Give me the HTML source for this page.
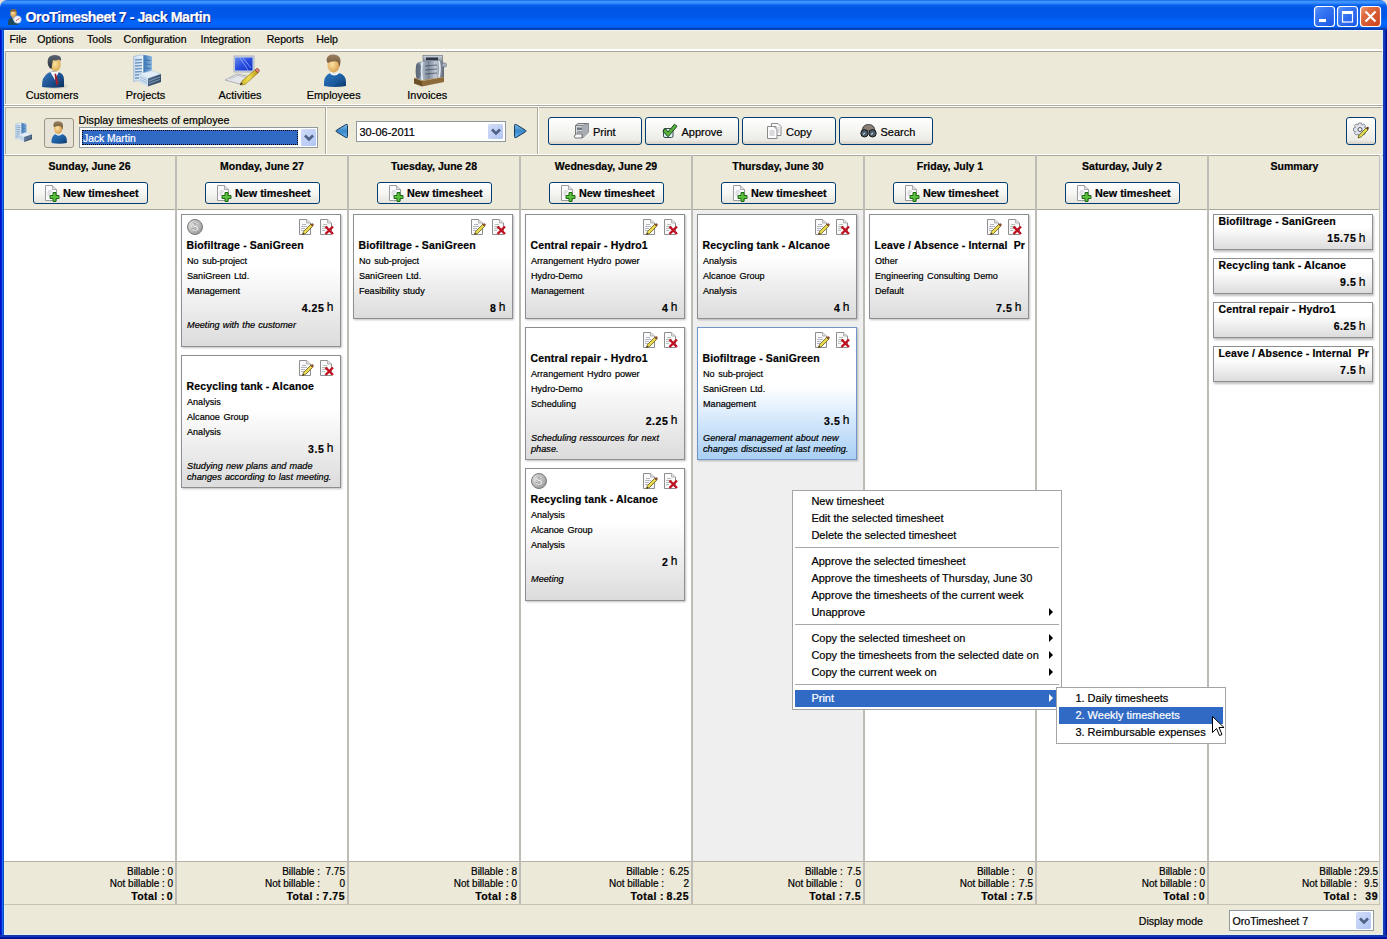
<!DOCTYPE html>
<html><head><meta charset="utf-8"><style>
body div{-webkit-text-stroke:0.2px currentColor;}
html,body{margin:0;padding:0;width:1387px;height:939px;overflow:hidden;font-family:"Liberation Sans",sans-serif;}
</style></head><body><div style="position:absolute;left:0px;top:0px;width:1387px;height:939px;background:#E8E0D8;"></div><div style="position:absolute;left:0px;top:10px;width:1387px;height:929px;background:#0A3FD0;"></div><div style="position:absolute;left:0px;top:0px;width:1387px;height:30px;background:linear-gradient(#0A58D8 0px,#3D95FF 1px,#3A90FF 3px,#0A62EE 5px,#0055E5 8px,#0058E8 17px,#0066FF 22px,#0062F6 27px,#0842B8 28.5px,#0842B8 30px);border-radius:7px 7px 0 0;"></div><div style="position:absolute;left:0px;top:30px;width:4px;height:909px;background:linear-gradient(90deg,#0010C8 0px,#0010C8 1px,#0028D0 1px,#0028D0 2px,#1A66F8 2px,#1A66F8 3px,#0850C0 3px,#0850C0 4px);"></div><div style="position:absolute;left:1383px;top:30px;width:4px;height:909px;background:linear-gradient(90deg,#1A40A8 0px,#1A40A8 1px,#1638B8 1px,#1638B8 2px,#0022B0 2px,#0022B0 3px,#001090 3px,#001090 4px);"></div><div style="position:absolute;left:0px;top:935px;width:1387px;height:4px;background:linear-gradient(#1A3A9A 0px,#1A3A9A 1px,#1438B8 1px,#1438B8 2px,#0018A8 2px,#0018A8 3px,#001090 3px,#001090 4px);"></div><div style="position:absolute;left:4px;top:30px;width:1379px;height:905px;background:#ECE9D8;"></div><div style="position:absolute;left:4px;top:934px;width:1379px;height:1px;background:#DDF0FF;"></div><div style="position:absolute;left:4px;top:30px;width:1379px;height:1px;background:#F2F4F6;"></div><div style="position:absolute;left:1382px;top:30px;width:1px;height:905px;background:#DCEEFF;"></div><div style="position:absolute;left:4px;top:30px;width:1px;height:905px;background:#E4F0FA;"></div><div style="position:absolute;top:10.48px;height:14.2px;line-height:14.2px;font-size:14.2px;white-space:pre;color:#fff;font-weight:bold;letter-spacing:-0.45px;left:25.5px;text-shadow:1px 1px 0 #0A1E85;">OroTimesheet 7 - Jack Martin</div><svg style="position:absolute;left:4px;top:6px" width="18" height="19" viewBox="0 0 18 19">
<defs><radialGradient id="tf" cx="0.4" cy="0.4" r="0.6"><stop offset="0" stop-color="#FFE7A8"/><stop offset="1" stop-color="#C8923C"/></radialGradient></defs>
<path d="M4 17 Q4 12 8 11.5 L12 11.5 Q14 12 14 15 L14 19 L4 19 Z" fill="#1E4A60"/>
<path d="M8 11.5 L10 15 L12 11.5 Z" fill="#E8EEF0"/>
<ellipse cx="9.5" cy="7.5" rx="3.2" ry="4" fill="url(#tf)"/>
<path d="M6.2 7 Q6 3 9.5 3 Q13 3 12.8 6.5 L12 5.5 Q9 6 7 5.5 Z" fill="#8A6A3A"/>
<circle cx="13.5" cy="13.5" r="3.8" fill="#F4F4F8" stroke="#A0A8C0" stroke-width="0.6"/>
<path d="M12 15 L13.5 13.5 L15.5 12.5" stroke="#B03040" stroke-width="0.8" fill="none"/>
</svg><svg style="position:absolute;left:1313px;top:5px" width="70" height="23" viewBox="0 0 70 23">
<defs>
<linearGradient id="bb" x1="0" y1="0" x2="1" y2="1"><stop offset="0" stop-color="#6E9CF8"/><stop offset="0.25" stop-color="#3C7BF4"/><stop offset="1" stop-color="#1A56E4"/></linearGradient>
<linearGradient id="rb" x1="0" y1="0" x2="1" y2="1"><stop offset="0" stop-color="#F0A080"/><stop offset="0.3" stop-color="#E06A40"/><stop offset="1" stop-color="#C8401C"/></linearGradient>
</defs>
<rect x="1.5" y="1.5" width="20" height="20" rx="3" fill="url(#bb)" stroke="#fff" stroke-width="1.2"/>
<rect x="6" y="14" width="7" height="3" fill="#fff"/>
<rect x="24.5" y="1.5" width="20" height="20" rx="3" fill="url(#bb)" stroke="#fff" stroke-width="1.2"/>
<rect x="29.5" y="7" width="10" height="10" fill="none" stroke="#fff" stroke-width="1.2"/>
<rect x="29" y="6" width="11" height="3" fill="#fff"/>
<rect x="47.5" y="1.5" width="20" height="20" rx="3" fill="url(#rb)" stroke="#fff" stroke-width="1.2"/>
<path d="M52.5 6.5 L62.5 16.5 M62.5 6.5 L52.5 16.5" stroke="#fff" stroke-width="2.2"/>
</svg><div style="position:absolute;top:34.03px;height:10.6px;line-height:10.6px;font-size:10.6px;white-space:pre;color:#000;left:9.6px;">File</div><div style="position:absolute;top:34.03px;height:10.6px;line-height:10.6px;font-size:10.6px;white-space:pre;color:#000;left:37.3px;">Options</div><div style="position:absolute;top:34.03px;height:10.6px;line-height:10.6px;font-size:10.6px;white-space:pre;color:#000;left:87px;">Tools</div><div style="position:absolute;top:34.03px;height:10.6px;line-height:10.6px;font-size:10.6px;white-space:pre;color:#000;left:123.6px;">Configuration</div><div style="position:absolute;top:34.03px;height:10.6px;line-height:10.6px;font-size:10.6px;white-space:pre;color:#000;left:200.6px;">Integration</div><div style="position:absolute;top:34.03px;height:10.6px;line-height:10.6px;font-size:10.6px;white-space:pre;color:#000;left:266.7px;">Reports</div><div style="position:absolute;top:34.03px;height:10.6px;line-height:10.6px;font-size:10.6px;white-space:pre;color:#000;left:316.2px;">Help</div><div style="position:absolute;left:4px;top:49px;width:1379px;height:2px;background:#fff;"></div><div style="position:absolute;left:5px;top:51px;width:1377px;height:1px;background:#ACA899;"></div><div style="position:absolute;left:5px;top:51px;width:1px;height:53px;background:#ACA899;"></div><div style="position:absolute;left:5px;top:104px;width:1377px;height:1px;background:#fff;"></div><div style="position:absolute;left:4px;top:105px;width:1379px;height:1px;background:#ACA899;"></div><div style="position:absolute;left:4px;top:106px;width:1379px;height:1px;background:#fff;"></div><div style="position:absolute;top:90.37px;height:10.9px;line-height:10.9px;font-size:10.9px;white-space:pre;color:#000;left:5.0px;width:94px;text-align:center;">Customers</div><div style="position:absolute;top:90.37px;height:10.9px;line-height:10.9px;font-size:10.9px;white-space:pre;color:#000;left:98.5px;width:94px;text-align:center;">Projects</div><div style="position:absolute;top:90.37px;height:10.9px;line-height:10.9px;font-size:10.9px;white-space:pre;color:#000;left:193.0px;width:94px;text-align:center;">Activities</div><div style="position:absolute;top:90.37px;height:10.9px;line-height:10.9px;font-size:10.9px;white-space:pre;color:#000;left:286.7px;width:94px;text-align:center;">Employees</div><div style="position:absolute;top:90.37px;height:10.9px;line-height:10.9px;font-size:10.9px;white-space:pre;color:#000;left:380.3px;width:94px;text-align:center;">Invoices</div><svg style="position:absolute;left:36px;top:50px" width="34" height="40" viewBox="0 0 34 40">
<defs>
<linearGradient id="suit" x1="0" y1="0" x2="1" y2="1"><stop offset="0" stop-color="#3A7BC0"/><stop offset="0.6" stop-color="#1B4F8C"/><stop offset="1" stop-color="#0C2E5A"/></linearGradient>
<radialGradient id="face" cx="0.45" cy="0.45" r="0.6"><stop offset="0" stop-color="#FBE3A0"/><stop offset="1" stop-color="#D8A850"/></radialGradient>
<linearGradient id="hair" x1="0" y1="0" x2="0" y2="1"><stop offset="0" stop-color="#5A6470"/><stop offset="1" stop-color="#2C333C"/></linearGradient>
</defs>
<ellipse cx="19" cy="36" rx="13" ry="3" fill="#000" opacity="0.08"/>
<path d="M6 37 Q5.5 27 12 23 L17 21 L22 22 Q28 23 28 30 L28 37 Q18 38.5 6 37 Z" fill="url(#suit)"/>
<path d="M14 21.5 L19 30 L23 21.5 Z" fill="#F4F6F8"/>
<path d="M18.5 24 L20 23.5 L22.5 33 L20.5 36 L19 28 Z" fill="#A02030"/>
<ellipse cx="19.5" cy="14.5" rx="5.2" ry="7" fill="url(#face)"/>
<path d="M12 15 Q10 5 19 5 Q26 5 25 11 L23 9.5 Q19 11 17 10 Q16 14 15.5 19 Q13 18 12 15 Z" fill="url(#hair)"/>
</svg><svg style="position:absolute;left:126px;top:50px" width="40" height="40" viewBox="0 0 40 40">
<defs>
<linearGradient id="blp1" x1="0" y1="0" x2="1" y2="0"><stop offset="0" stop-color="#C4D8EC"/><stop offset="1" stop-color="#F0F6FC"/></linearGradient>
<linearGradient id="brp1" x1="0" y1="0" x2="1" y2="0"><stop offset="0" stop-color="#3A78B8"/><stop offset="1" stop-color="#90B8E0"/></linearGradient>
<linearGradient id="bfp1" x1="0" y1="0" x2="1" y2="1"><stop offset="0" stop-color="#5A7898"/><stop offset="1" stop-color="#283C54"/></linearGradient>
</defs>
<path d="M7.5 6.5 Q12 4.5 17.5 5 L17.5 30 L7.5 31.5 Z" fill="url(#blp1)" stroke="#9AB4CC" stroke-width="0.6"/>
<path d="M17.5 5 Q22 5 26 6.5 L26 22 L17.5 25 Z" fill="url(#brp1)"/>
<g stroke="#7098C0" stroke-width="1.3">
<path d="M9 10 L16 9.5 M9 13 L16 12.5 M9 16 L16 15.5 M9 19 L16 18.5 M9 22 L16 21.5 M9 25 L16 24.5 M9 28 L13 28"/>
</g>
<g stroke="#2A5A98" stroke-width="1" opacity="0.6"><path d="M19 10 L25 10.5 M19 14 L25 14.5 M19 18 L25 18.5"/></g>
<path d="M13 24 L26 20.5 L35 24 L22 28.5 Z" fill="#E4EEF8" stroke="#A8C0D8" stroke-width="0.5"/>
<path d="M13 24 L22 28.5 L22 36.5 L13 32.5 Z" fill="#D0E0F0"/>
<g stroke="#98B4D0" stroke-width="0.9"><path d="M14 27 L21 30.5 M14 29.5 L21 33"/></g>
<path d="M22 28.5 L35 24 L35 32 L22 36.5 Z" fill="url(#bfp1)"/>
<g stroke="#8AA8C8" stroke-width="0.8"><path d="M23 31 L34 27 M23 33.5 L34 29.5"/></g>
</svg><svg style="position:absolute;left:220px;top:50px" width="42" height="40" viewBox="0 0 42 40">
<defs>
<linearGradient id="scr" x1="0" y1="0" x2="1" y2="1"><stop offset="0" stop-color="#6A8CF0"/><stop offset="0.5" stop-color="#2A4CE0"/><stop offset="1" stop-color="#1030C0"/></linearGradient>
<linearGradient id="pen" x1="0" y1="0" x2="1" y2="0"><stop offset="0" stop-color="#C8B020"/><stop offset="0.5" stop-color="#F0DC50"/><stop offset="1" stop-color="#B89A18"/></linearGradient>
</defs>
<rect x="14" y="6" width="20" height="16" fill="#D8DEE8" stroke="#9AA4B4" stroke-width="0.8"/>
<rect x="15" y="7.5" width="17.5" height="13" fill="url(#scr)"/>
<path d="M20 8 L28 20 M23 8 L31 18" stroke="#A8C0FF" stroke-width="1" opacity="0.7"/>
<path d="M5 30 L17 24 L32 27 L20 34 Z" fill="#E4E6EA" stroke="#A0A4AC" stroke-width="0.8"/>
<path d="M10 29 L18 25.5 L26 27.5" stroke="#B8BCC4" stroke-width="0.8" fill="none"/>
<path d="M20 35 L22 31 L35 20 L38 23 L25 34.5 Z" fill="url(#pen)" stroke="#8A7010" stroke-width="0.6"/>
<path d="M35 20 L36.5 18.5 Q38.5 18 39.5 20.5 L38 23 Z" fill="#E08070" stroke="#803020" stroke-width="0.6"/>
<path d="M20 35 L21 32.5 L23 34 Z" fill="#303030"/>
</svg><svg style="position:absolute;left:316px;top:50px" width="36" height="40" viewBox="0 0 36 40">
<defs>
<linearGradient id="she1" x1="0" y1="0" x2="1" y2="1"><stop offset="0" stop-color="#2E78C0"/><stop offset="0.6" stop-color="#1A5A9C"/><stop offset="1" stop-color="#0C3668"/></linearGradient>
<radialGradient id="fce1" cx="0.4" cy="0.45" r="0.65"><stop offset="0" stop-color="#FCE2A4"/><stop offset="1" stop-color="#D49A48"/></radialGradient>
<linearGradient id="hre1" x1="0" y1="0" x2="0" y2="1"><stop offset="0" stop-color="#9A8060"/><stop offset="1" stop-color="#6A5030"/></linearGradient>
</defs>
<path d="M8 36 Q7 26 14 23 L18 24 L23 23 Q30 25 30 32 L30 36 Q19 38 8 36 Z" fill="url(#she1)"/>
<path d="M13.5 23 Q18 28 23.5 23 L22 22 Q18 25 15 22 Z" fill="#F0F4F8"/>
<ellipse cx="17.5" cy="15" rx="6" ry="7.5" fill="url(#fce1)"/>
<path d="M10.5 10 Q11 4 18 4.5 Q25 5 24.5 12 L23.5 17 L22 12 Q17 10 11.5 13 Z" fill="url(#hre1)"/>
</svg><svg style="position:absolute;left:406px;top:50px" width="44" height="40" viewBox="0 0 44 40">
<defs>
<linearGradient id="drum" x1="0" y1="0" x2="1" y2="0"><stop offset="0" stop-color="#5A6676"/><stop offset="0.2" stop-color="#B4BECC"/><stop offset="0.45" stop-color="#7A8898"/><stop offset="0.7" stop-color="#C4CCD8"/><stop offset="1" stop-color="#5A6474"/></linearGradient>
<linearGradient id="disp" x1="0" y1="0" x2="0" y2="1"><stop offset="0" stop-color="#D0D6DE"/><stop offset="1" stop-color="#7A8490"/></linearGradient>
</defs>
<path d="M8 28 L30 25 L38 27 L16 31 Z" fill="#BC9460"/>
<path d="M8 28 L16 31 L16 36.5 L8 33.5 Z" fill="#6E5028"/>
<path d="M16 31 L38 27 L38 32 L16 36.5 Z" fill="#8C6A3A"/>
<rect x="17" y="5.5" width="19.5" height="6.5" fill="url(#disp)" stroke="#5A6474" stroke-width="0.6"/>
<rect x="20" y="7.5" width="12" height="2.6" fill="#2A3444"/>
<path d="M10 16 Q10 12 15 11.5 L34 11 Q38 11.5 38 15 L38 27 L16 30 Q10 30 10 26 Z" fill="url(#drum)"/>
<ellipse cx="12.5" cy="21" rx="3" ry="7.5" fill="#5E6A7A" opacity="0.8"/>
<path d="M16.5 12 Q14.5 21 16.5 30 M33 11 Q35 19 33 27.5" stroke="#E4EAF2" stroke-width="1.6" fill="none"/>
<path d="M19 16 L31 15 M19 20 L31 19 M19 24 L31 23" stroke="#4A5464" stroke-width="1.2" opacity="0.8"/>
<rect x="36" y="13" width="4.5" height="4" rx="1.5" fill="#A8B0BC" stroke="#5A6474" stroke-width="0.5"/>
</svg><div style="position:absolute;left:5px;top:107px;width:1377px;height:1px;background:#ACA899;"></div><div style="position:absolute;left:5px;top:107px;width:1px;height:47px;background:#ACA899;"></div><div style="position:absolute;left:5px;top:154px;width:1377px;height:1px;background:#fff;"></div><div style="position:absolute;left:325px;top:107px;width:1px;height:47px;background:#ACA899;"></div><div style="position:absolute;left:326px;top:107px;width:1px;height:47px;background:#fff;"></div><div style="position:absolute;left:537px;top:107px;width:1px;height:47px;background:#ACA899;"></div><div style="position:absolute;left:538px;top:107px;width:1px;height:47px;background:#fff;"></div><div style="position:absolute;top:115.34px;height:10.7px;line-height:10.7px;font-size:10.7px;white-space:pre;color:#000;left:78.5px;">Display timesheets of employee</div><svg style="position:absolute;left:11px;top:120px" width="24" height="24" viewBox="0 0 40 40">
<defs>
<linearGradient id="blp2" x1="0" y1="0" x2="1" y2="0"><stop offset="0" stop-color="#C4D8EC"/><stop offset="1" stop-color="#F0F6FC"/></linearGradient>
<linearGradient id="brp2" x1="0" y1="0" x2="1" y2="0"><stop offset="0" stop-color="#3A78B8"/><stop offset="1" stop-color="#90B8E0"/></linearGradient>
<linearGradient id="bfp2" x1="0" y1="0" x2="1" y2="1"><stop offset="0" stop-color="#5A7898"/><stop offset="1" stop-color="#283C54"/></linearGradient>
</defs>
<path d="M7.5 6.5 Q12 4.5 17.5 5 L17.5 30 L7.5 31.5 Z" fill="url(#blp2)" stroke="#9AB4CC" stroke-width="0.6"/>
<path d="M17.5 5 Q22 5 26 6.5 L26 22 L17.5 25 Z" fill="url(#brp2)"/>
<g stroke="#7098C0" stroke-width="1.3">
<path d="M9 10 L16 9.5 M9 13 L16 12.5 M9 16 L16 15.5 M9 19 L16 18.5 M9 22 L16 21.5 M9 25 L16 24.5 M9 28 L13 28"/>
</g>
<g stroke="#2A5A98" stroke-width="1" opacity="0.6"><path d="M19 10 L25 10.5 M19 14 L25 14.5 M19 18 L25 18.5"/></g>
<path d="M13 24 L26 20.5 L35 24 L22 28.5 Z" fill="#E4EEF8" stroke="#A8C0D8" stroke-width="0.5"/>
<path d="M13 24 L22 28.5 L22 36.5 L13 32.5 Z" fill="#D0E0F0"/>
<g stroke="#98B4D0" stroke-width="0.9"><path d="M14 27 L21 30.5 M14 29.5 L21 33"/></g>
<path d="M22 28.5 L35 24 L35 32 L22 36.5 Z" fill="url(#bfp2)"/>
<g stroke="#8AA8C8" stroke-width="0.8"><path d="M23 31 L34 27 M23 33.5 L34 29.5"/></g>
</svg><div style="position:absolute;left:44px;top:118px;width:28px;height:28px;border:1px solid #9A9684;border-radius:3px;background:#E6E3D6;"></div><svg style="position:absolute;left:46px;top:118px" width="25" height="28" viewBox="0 0 36 40">
<defs>
<linearGradient id="she2" x1="0" y1="0" x2="1" y2="1"><stop offset="0" stop-color="#2E78C0"/><stop offset="0.6" stop-color="#1A5A9C"/><stop offset="1" stop-color="#0C3668"/></linearGradient>
<radialGradient id="fce2" cx="0.4" cy="0.45" r="0.65"><stop offset="0" stop-color="#FCE2A4"/><stop offset="1" stop-color="#D49A48"/></radialGradient>
<linearGradient id="hre2" x1="0" y1="0" x2="0" y2="1"><stop offset="0" stop-color="#9A8060"/><stop offset="1" stop-color="#6A5030"/></linearGradient>
</defs>
<path d="M8 36 Q7 26 14 23 L18 24 L23 23 Q30 25 30 32 L30 36 Q19 38 8 36 Z" fill="url(#she2)"/>
<path d="M13.5 23 Q18 28 23.5 23 L22 22 Q18 25 15 22 Z" fill="#F0F4F8"/>
<ellipse cx="17.5" cy="15" rx="6" ry="7.5" fill="url(#fce2)"/>
<path d="M10.5 10 Q11 4 18 4.5 Q25 5 24.5 12 L23.5 17 L22 12 Q17 10 11.5 13 Z" fill="url(#hre2)"/>
</svg><div style="position:absolute;left:79px;top:127px;width:237px;height:19px;border:1px solid #8E9A9E;background:#fff;"></div><div style="position:absolute;left:82px;top:130px;width:216px;height:15px;background:#316AC5;outline:1px dotted #000;outline-offset:-1px;"></div><div style="position:absolute;top:134.08px;height:10.3px;line-height:10.3px;font-size:10.3px;white-space:pre;color:#fff;left:83px;">Jack Martin</div><svg style="position:absolute;left:301px;top:129px" width="15" height="17" viewBox="0 0 15 17">
<defs><linearGradient id="cbc1" x1="0" y1="0" x2="1" y2="1"><stop offset="0" stop-color="#D2DCF8"/><stop offset="1" stop-color="#B0C4F4"/></linearGradient></defs>
<rect x="0" y="0" width="15" height="17" rx="1.5" fill="url(#cbc1)"/>
<path d="M4.0 6.5 L8.0 10.5 L12.0 6.5" stroke="#4D6185" stroke-width="2.6" fill="none"/>
</svg><svg style="position:absolute;left:335px;top:123px" width="14" height="16" viewBox="0 0 14 16">
<defs><linearGradient id="nal" x1="0" y1="0" x2="0" y2="1"><stop offset="0" stop-color="#80C0F0"/><stop offset="0.5" stop-color="#3A88C8"/><stop offset="1" stop-color="#60B0F0"/></linearGradient></defs>
<path d="M12.5 2.5 Q12.5 0.6 10.7 1.6 L1.5 7.2 Q0 8 1.5 8.8 L10.7 14.4 Q12.5 15.4 12.5 13.5 Z" fill="url(#nal)" stroke="#1A3A5A" stroke-width="1"/>
</svg><div style="position:absolute;left:356px;top:121px;width:148px;height:19px;border:1px solid #8E9A9E;background:#fff;"></div><div style="position:absolute;top:126.69px;height:11px;line-height:11px;font-size:11px;white-space:pre;color:#000;left:359.5px;">30-06-2011</div><svg style="position:absolute;left:488px;top:124px" width="15" height="15" viewBox="0 0 15 15">
<defs><linearGradient id="cbc2" x1="0" y1="0" x2="1" y2="1"><stop offset="0" stop-color="#D2DCF8"/><stop offset="1" stop-color="#B0C4F4"/></linearGradient></defs>
<rect x="0" y="0" width="15" height="15" rx="1.5" fill="url(#cbc2)"/>
<path d="M4.0 5.5 L8.0 9.5 L12.0 5.5" stroke="#4D6185" stroke-width="2.6" fill="none"/>
</svg><svg style="position:absolute;left:513px;top:123px" width="14" height="16" viewBox="0 0 14 16">
<defs><linearGradient id="nar" x1="0" y1="0" x2="0" y2="1"><stop offset="0" stop-color="#80C0F0"/><stop offset="0.5" stop-color="#3A88C8"/><stop offset="1" stop-color="#60B0F0"/></linearGradient></defs>
<path d="M1.5 2.5 Q1.5 0.6 3.3 1.6 L12.5 7.2 Q14 8 12.5 8.8 L3.3 14.4 Q1.5 15.4 1.5 13.5 Z" fill="url(#nar)" stroke="#1A3A5A" stroke-width="1"/>
</svg><div style="position:absolute;left:548px;top:117px;width:92px;height:26px;border:1px solid #003C74;border-radius:3px;background:linear-gradient(#FFFFFF,#F4F4F0 50%,#ECEBE6 85%,#D6D0C5);"></div><div style="position:absolute;left:645px;top:117px;width:92px;height:26px;border:1px solid #003C74;border-radius:3px;background:linear-gradient(#FFFFFF,#F4F4F0 50%,#ECEBE6 85%,#D6D0C5);"></div><div style="position:absolute;left:742px;top:117px;width:92px;height:26px;border:1px solid #003C74;border-radius:3px;background:linear-gradient(#FFFFFF,#F4F4F0 50%,#ECEBE6 85%,#D6D0C5);"></div><div style="position:absolute;left:839px;top:117px;width:92px;height:26px;border:1px solid #003C74;border-radius:3px;background:linear-gradient(#FFFFFF,#F4F4F0 50%,#ECEBE6 85%,#D6D0C5);"></div><div style="position:absolute;top:126.69px;height:11px;line-height:11px;font-size:11px;white-space:pre;color:#000;left:593px;">Print</div><div style="position:absolute;top:126.69px;height:11px;line-height:11px;font-size:11px;white-space:pre;color:#000;left:681.5px;">Approve</div><div style="position:absolute;top:126.69px;height:11px;line-height:11px;font-size:11px;white-space:pre;color:#000;left:786px;">Copy</div><div style="position:absolute;top:126.69px;height:11px;line-height:11px;font-size:11px;white-space:pre;color:#000;left:880.5px;">Search</div><svg style="position:absolute;left:573px;top:122px" width="17" height="17" viewBox="0 0 17 17">
<path d="M2.5 3.5 L5 1.5 L15.5 1.5 L15.5 10 L10 15.5 L2.5 15.5 Z" fill="#D4D8DC" stroke="#6A6A6A" stroke-width="0.9"/>
<path d="M2.5 3.5 L10 3.5 L15.5 1.5" fill="none" stroke="#6A6A6A" stroke-width="0.8"/>
<path d="M10 3.5 L10 15.5" stroke="#6A6A6A" stroke-width="0.8"/>
<path d="M10 3.5 L15.5 1.5 L15.5 10 L10 15.5 Z" fill="#A8ACB4"/>
<rect x="4" y="5.5" width="5" height="2.5" fill="#70757C"/>
<rect x="4" y="9" width="5" height="2" fill="#9AA0A8"/>
<path d="M1 14 L3.5 12 L9 12 L9 16 L2 16 Z" fill="#FAFAFA" stroke="#555" stroke-width="0.8"/>
</svg><svg style="position:absolute;left:662px;top:123px" width="16" height="16" viewBox="0 0 16 16">
<rect x="1.5" y="5.5" width="9.5" height="9" rx="1.5" fill="#D8F0F0" stroke="#3A4A50" stroke-width="1"/>
<path d="M0.8 8 L3.5 5.8 L6 9 L12.5 1.2 L15 3.3 L6 13.8 Z" fill="#58B040" stroke="#1A4A10" stroke-width="1"/>
</svg><svg style="position:absolute;left:767px;top:123px" width="16" height="17" viewBox="0 0 16 17">
<path d="M4.5 0.5 L11 0.5 L14 3.5 L14 12.5 L9 12.5 L9 3.5 L4.5 3.5 Z" fill="#FAFAFC" stroke="#8A8A8A" stroke-width="1"/>
<path d="M0.5 3.5 L7 3.5 L10 6.5 L10 15.5 L0.5 15.5 Z" fill="#FCFCFE" stroke="#8A8A8A" stroke-width="1"/>
<path d="M2.5 8 L7.5 8 M2.5 10 L7.5 10 M2.5 12 L7.5 12" stroke="#B0B0B8" stroke-width="0.9"/>
<path d="M10.5 5 L12.5 5 M10.5 7 L12.5 7 M10.5 9 L12.5 9" stroke="#B0B0B8" stroke-width="0.9"/>
</svg><svg style="position:absolute;left:860px;top:124px" width="17" height="14" viewBox="0 0 17 14">
<path d="M2 7 Q2.5 2 5.5 1 L8.5 0.5 L11.5 1 Q14.5 2 15 7 L12 8 L8.5 7 L5 8 Z" fill="#8A8078" stroke="#2A2A2A" stroke-width="0.8"/>
<circle cx="4.5" cy="9.3" r="3.7" fill="#4A5A68" stroke="#1A1A1A" stroke-width="1"/>
<circle cx="12.5" cy="9.3" r="3.7" fill="#4A5A68" stroke="#1A1A1A" stroke-width="1"/>
<path d="M3 10.5 L5 9 M11 10.5 L13 9" stroke="#C8D4E0" stroke-width="1.2"/>
</svg><div style="position:absolute;left:1346px;top:117px;width:28px;height:26px;border:1px solid #003C74;border-radius:3px;background:linear-gradient(#FFFFFF,#F4F4F0 50%,#ECEBE6 85%,#D6D0C5);"></div><svg style="position:absolute;left:1352px;top:121px" width="18" height="18" viewBox="0 0 18 18">
<g transform="translate(8,8.5)">
<path d="M-1.5 -6.5 L1.5 -6.5 L2 -4.5 L4 -5.5 L5.5 -4 L4.5 -2 L6.5 -1.5 L6.5 1.5 L4.5 2 L5.5 4 L4 5.5 L2 4.5 L1.5 6.5 L-1.5 6.5 L-2 4.5 L-4 5.5 L-5.5 4 L-4.5 2 L-6.5 1.5 L-6.5 -1.5 L-4.5 -2 L-5.5 -4 L-4 -5.5 L-2 -4.5 Z" fill="#E0E2EC" stroke="#7A7A88" stroke-width="0.8"/>
<circle cx="0" cy="0" r="2" fill="#FAFAFA" stroke="#505060" stroke-width="1"/>
</g>
<path d="M6 17 L7 14 L14 7 L16 9 L9 16 Z" fill="#E0D850" stroke="#4A4A10" stroke-width="0.7"/>
<path d="M14 7 L15 6 Q16 5.5 16.8 6.5 Q17 7.5 16.5 8 L16 9 Z" fill="#6A3A20"/>
</svg><div style="position:absolute;left:4px;top:155px;width:1376px;height:750px;background:#fff;"></div><div style="position:absolute;left:4px;top:156px;width:1376px;height:53px;background:#ECE9D8;"></div><div style="position:absolute;left:4px;top:155px;width:1379px;height:1px;background:#ACA899;"></div><div style="position:absolute;left:4px;top:209px;width:1376px;height:1px;background:#A9A89F;"></div><div style="position:absolute;left:693px;top:210px;width:171px;height:651px;background:#EFEFEF;"></div><div style="position:absolute;left:4px;top:861px;width:1376px;height:1px;background:#B5B3A8;"></div><div style="position:absolute;left:4px;top:862px;width:1376px;height:43px;background:#ECE9D8;"></div><div style="position:absolute;left:4px;top:904px;width:1376px;height:1px;background:#C6C3B6;"></div><div style="position:absolute;left:175px;top:155px;width:2px;height:750px;background:#BDBDB5;"></div><div style="position:absolute;left:347px;top:155px;width:2px;height:750px;background:#BDBDB5;"></div><div style="position:absolute;left:519px;top:155px;width:2px;height:750px;background:#BDBDB5;"></div><div style="position:absolute;left:691px;top:155px;width:2px;height:750px;background:#BDBDB5;"></div><div style="position:absolute;left:863px;top:155px;width:2px;height:750px;background:#BDBDB5;"></div><div style="position:absolute;left:1035px;top:155px;width:2px;height:750px;background:#BDBDB5;"></div><div style="position:absolute;left:1207px;top:155px;width:2px;height:750px;background:#BDBDB5;"></div><div style="position:absolute;left:1380px;top:155px;width:2px;height:750px;background:#E8E6E0;"></div><div style="position:absolute;left:1379px;top:155px;width:1px;height:750px;background:#C4C2BC;"></div><div style="position:absolute;top:161.11px;height:10.5px;line-height:10.5px;font-size:10.5px;white-space:pre;color:#000;font-weight:bold;left:4.5px;width:170px;text-align:center;">Sunday, June 26</div><div style="position:absolute;left:33px;top:182px;width:113px;height:20px;border:1px solid #003C74;border-radius:3px;background:linear-gradient(#FFFFFF,#F3F3EF 60%,#E5E4DC);"></div><div style="position:absolute;top:187.86px;height:10.8px;line-height:10.8px;font-size:10.8px;white-space:pre;color:#000;font-weight:bold;left:63px;">New timesheet</div><svg style="position:absolute;left:45px;top:185px" width="16" height="18" viewBox="0 0 16 18">
<path d="M0.5 0.5 L7.5 0.5 L11.5 4.5 L11.5 15.5 L0.5 15.5 Z" fill="#FAFAFC" stroke="#9A9A9A" stroke-width="1"/>
<path d="M7.5 0.5 L7.5 4.5 L11.5 4.5" fill="#E4E4E8" stroke="#9A9A9A" stroke-width="0.8"/>
<path d="M3 6 L7 6 M2.5 8 L6 8 M2.5 10 L5 10" stroke="#C4C4CC" stroke-width="1"/>
<path d="M8 7.5 L11 7.5 L11 10.5 L14 10.5 L14 13.5 L11 13.5 L11 16.5 L8 16.5 L8 13.5 L5 13.5 L5 10.5 L8 10.5 Z" fill="#5CC040" stroke="#1E6A10" stroke-width="1"/>
</svg><div style="position:absolute;top:161.11px;height:10.5px;line-height:10.5px;font-size:10.5px;white-space:pre;color:#000;font-weight:bold;left:177.0px;width:170px;text-align:center;">Monday, June 27</div><div style="position:absolute;left:205px;top:182px;width:113px;height:20px;border:1px solid #003C74;border-radius:3px;background:linear-gradient(#FFFFFF,#F3F3EF 60%,#E5E4DC);"></div><div style="position:absolute;top:187.86px;height:10.8px;line-height:10.8px;font-size:10.8px;white-space:pre;color:#000;font-weight:bold;left:235px;">New timesheet</div><svg style="position:absolute;left:217px;top:185px" width="16" height="18" viewBox="0 0 16 18">
<path d="M0.5 0.5 L7.5 0.5 L11.5 4.5 L11.5 15.5 L0.5 15.5 Z" fill="#FAFAFC" stroke="#9A9A9A" stroke-width="1"/>
<path d="M7.5 0.5 L7.5 4.5 L11.5 4.5" fill="#E4E4E8" stroke="#9A9A9A" stroke-width="0.8"/>
<path d="M3 6 L7 6 M2.5 8 L6 8 M2.5 10 L5 10" stroke="#C4C4CC" stroke-width="1"/>
<path d="M8 7.5 L11 7.5 L11 10.5 L14 10.5 L14 13.5 L11 13.5 L11 16.5 L8 16.5 L8 13.5 L5 13.5 L5 10.5 L8 10.5 Z" fill="#5CC040" stroke="#1E6A10" stroke-width="1"/>
</svg><div style="position:absolute;top:161.11px;height:10.5px;line-height:10.5px;font-size:10.5px;white-space:pre;color:#000;font-weight:bold;left:349.0px;width:170px;text-align:center;">Tuesday, June 28</div><div style="position:absolute;left:377px;top:182px;width:113px;height:20px;border:1px solid #003C74;border-radius:3px;background:linear-gradient(#FFFFFF,#F3F3EF 60%,#E5E4DC);"></div><div style="position:absolute;top:187.86px;height:10.8px;line-height:10.8px;font-size:10.8px;white-space:pre;color:#000;font-weight:bold;left:407px;">New timesheet</div><svg style="position:absolute;left:389px;top:185px" width="16" height="18" viewBox="0 0 16 18">
<path d="M0.5 0.5 L7.5 0.5 L11.5 4.5 L11.5 15.5 L0.5 15.5 Z" fill="#FAFAFC" stroke="#9A9A9A" stroke-width="1"/>
<path d="M7.5 0.5 L7.5 4.5 L11.5 4.5" fill="#E4E4E8" stroke="#9A9A9A" stroke-width="0.8"/>
<path d="M3 6 L7 6 M2.5 8 L6 8 M2.5 10 L5 10" stroke="#C4C4CC" stroke-width="1"/>
<path d="M8 7.5 L11 7.5 L11 10.5 L14 10.5 L14 13.5 L11 13.5 L11 16.5 L8 16.5 L8 13.5 L5 13.5 L5 10.5 L8 10.5 Z" fill="#5CC040" stroke="#1E6A10" stroke-width="1"/>
</svg><div style="position:absolute;top:161.11px;height:10.5px;line-height:10.5px;font-size:10.5px;white-space:pre;color:#000;font-weight:bold;left:521.0px;width:170px;text-align:center;">Wednesday, June 29</div><div style="position:absolute;left:549px;top:182px;width:113px;height:20px;border:1px solid #003C74;border-radius:3px;background:linear-gradient(#FFFFFF,#F3F3EF 60%,#E5E4DC);"></div><div style="position:absolute;top:187.86px;height:10.8px;line-height:10.8px;font-size:10.8px;white-space:pre;color:#000;font-weight:bold;left:579px;">New timesheet</div><svg style="position:absolute;left:561px;top:185px" width="16" height="18" viewBox="0 0 16 18">
<path d="M0.5 0.5 L7.5 0.5 L11.5 4.5 L11.5 15.5 L0.5 15.5 Z" fill="#FAFAFC" stroke="#9A9A9A" stroke-width="1"/>
<path d="M7.5 0.5 L7.5 4.5 L11.5 4.5" fill="#E4E4E8" stroke="#9A9A9A" stroke-width="0.8"/>
<path d="M3 6 L7 6 M2.5 8 L6 8 M2.5 10 L5 10" stroke="#C4C4CC" stroke-width="1"/>
<path d="M8 7.5 L11 7.5 L11 10.5 L14 10.5 L14 13.5 L11 13.5 L11 16.5 L8 16.5 L8 13.5 L5 13.5 L5 10.5 L8 10.5 Z" fill="#5CC040" stroke="#1E6A10" stroke-width="1"/>
</svg><div style="position:absolute;top:161.11px;height:10.5px;line-height:10.5px;font-size:10.5px;white-space:pre;color:#000;font-weight:bold;left:693.0px;width:170px;text-align:center;">Thursday, June 30</div><div style="position:absolute;left:721px;top:182px;width:113px;height:20px;border:1px solid #003C74;border-radius:3px;background:linear-gradient(#FFFFFF,#F3F3EF 60%,#E5E4DC);"></div><div style="position:absolute;top:187.86px;height:10.8px;line-height:10.8px;font-size:10.8px;white-space:pre;color:#000;font-weight:bold;left:751px;">New timesheet</div><svg style="position:absolute;left:733px;top:185px" width="16" height="18" viewBox="0 0 16 18">
<path d="M0.5 0.5 L7.5 0.5 L11.5 4.5 L11.5 15.5 L0.5 15.5 Z" fill="#FAFAFC" stroke="#9A9A9A" stroke-width="1"/>
<path d="M7.5 0.5 L7.5 4.5 L11.5 4.5" fill="#E4E4E8" stroke="#9A9A9A" stroke-width="0.8"/>
<path d="M3 6 L7 6 M2.5 8 L6 8 M2.5 10 L5 10" stroke="#C4C4CC" stroke-width="1"/>
<path d="M8 7.5 L11 7.5 L11 10.5 L14 10.5 L14 13.5 L11 13.5 L11 16.5 L8 16.5 L8 13.5 L5 13.5 L5 10.5 L8 10.5 Z" fill="#5CC040" stroke="#1E6A10" stroke-width="1"/>
</svg><div style="position:absolute;top:161.11px;height:10.5px;line-height:10.5px;font-size:10.5px;white-space:pre;color:#000;font-weight:bold;left:865.0px;width:170px;text-align:center;">Friday, July 1</div><div style="position:absolute;left:893px;top:182px;width:113px;height:20px;border:1px solid #003C74;border-radius:3px;background:linear-gradient(#FFFFFF,#F3F3EF 60%,#E5E4DC);"></div><div style="position:absolute;top:187.86px;height:10.8px;line-height:10.8px;font-size:10.8px;white-space:pre;color:#000;font-weight:bold;left:923px;">New timesheet</div><svg style="position:absolute;left:905px;top:185px" width="16" height="18" viewBox="0 0 16 18">
<path d="M0.5 0.5 L7.5 0.5 L11.5 4.5 L11.5 15.5 L0.5 15.5 Z" fill="#FAFAFC" stroke="#9A9A9A" stroke-width="1"/>
<path d="M7.5 0.5 L7.5 4.5 L11.5 4.5" fill="#E4E4E8" stroke="#9A9A9A" stroke-width="0.8"/>
<path d="M3 6 L7 6 M2.5 8 L6 8 M2.5 10 L5 10" stroke="#C4C4CC" stroke-width="1"/>
<path d="M8 7.5 L11 7.5 L11 10.5 L14 10.5 L14 13.5 L11 13.5 L11 16.5 L8 16.5 L8 13.5 L5 13.5 L5 10.5 L8 10.5 Z" fill="#5CC040" stroke="#1E6A10" stroke-width="1"/>
</svg><div style="position:absolute;top:161.11px;height:10.5px;line-height:10.5px;font-size:10.5px;white-space:pre;color:#000;font-weight:bold;left:1037.0px;width:170px;text-align:center;">Saturday, July 2</div><div style="position:absolute;left:1065px;top:182px;width:113px;height:20px;border:1px solid #003C74;border-radius:3px;background:linear-gradient(#FFFFFF,#F3F3EF 60%,#E5E4DC);"></div><div style="position:absolute;top:187.86px;height:10.8px;line-height:10.8px;font-size:10.8px;white-space:pre;color:#000;font-weight:bold;left:1095px;">New timesheet</div><svg style="position:absolute;left:1077px;top:185px" width="16" height="18" viewBox="0 0 16 18">
<path d="M0.5 0.5 L7.5 0.5 L11.5 4.5 L11.5 15.5 L0.5 15.5 Z" fill="#FAFAFC" stroke="#9A9A9A" stroke-width="1"/>
<path d="M7.5 0.5 L7.5 4.5 L11.5 4.5" fill="#E4E4E8" stroke="#9A9A9A" stroke-width="0.8"/>
<path d="M3 6 L7 6 M2.5 8 L6 8 M2.5 10 L5 10" stroke="#C4C4CC" stroke-width="1"/>
<path d="M8 7.5 L11 7.5 L11 10.5 L14 10.5 L14 13.5 L11 13.5 L11 16.5 L8 16.5 L8 13.5 L5 13.5 L5 10.5 L8 10.5 Z" fill="#5CC040" stroke="#1E6A10" stroke-width="1"/>
</svg><div style="position:absolute;top:161.11px;height:10.5px;line-height:10.5px;font-size:10.5px;white-space:pre;color:#000;font-weight:bold;left:1209.5px;width:170px;text-align:center;">Summary</div><div style="position:absolute;top:866.54px;height:10px;line-height:10px;font-size:10px;white-space:pre;color:#000;left:133px;width:40px;text-align:right;">0</div><div style="position:absolute;top:878.54px;height:10px;line-height:10px;font-size:10px;white-space:pre;color:#000;left:133px;width:40px;text-align:right;">0</div><div style="position:absolute;top:890.71px;height:10.5px;line-height:10.5px;font-size:10.5px;white-space:pre;color:#000;font-weight:bold;letter-spacing:0.5px;left:133px;width:40px;text-align:right;">0</div><div style="position:absolute;top:866.54px;height:10px;line-height:10px;font-size:10px;white-space:pre;color:#000;left:64.78516796874999px;width:100px;text-align:right;">Billable :</div><div style="position:absolute;top:878.54px;height:10px;line-height:10px;font-size:10px;white-space:pre;color:#000;left:64.78516796874999px;width:100px;text-align:right;">Not billable :</div><div style="position:absolute;top:890.71px;height:10.5px;line-height:10.5px;font-size:10.5px;white-space:pre;color:#000;font-weight:bold;letter-spacing:0.4px;left:64.78516796874999px;width:100px;text-align:right;">Total :</div><div style="position:absolute;top:866.54px;height:10px;line-height:10px;font-size:10px;white-space:pre;color:#000;left:305px;width:40px;text-align:right;">7.75</div><div style="position:absolute;top:878.54px;height:10px;line-height:10px;font-size:10px;white-space:pre;color:#000;left:305px;width:40px;text-align:right;">0</div><div style="position:absolute;top:890.71px;height:10.5px;line-height:10.5px;font-size:10.5px;white-space:pre;color:#000;font-weight:bold;letter-spacing:0.5px;left:305px;width:40px;text-align:right;">7.75</div><div style="position:absolute;top:866.54px;height:10px;line-height:10px;font-size:10px;white-space:pre;color:#000;left:220.00091796875px;width:100px;text-align:right;">Billable :</div><div style="position:absolute;top:878.54px;height:10px;line-height:10px;font-size:10px;white-space:pre;color:#000;left:220.00091796875px;width:100px;text-align:right;">Not billable :</div><div style="position:absolute;top:890.71px;height:10.5px;line-height:10.5px;font-size:10.5px;white-space:pre;color:#000;font-weight:bold;letter-spacing:0.4px;left:220.00091796875px;width:100px;text-align:right;">Total :</div><div style="position:absolute;top:866.54px;height:10px;line-height:10px;font-size:10px;white-space:pre;color:#000;left:477px;width:40px;text-align:right;">8</div><div style="position:absolute;top:878.54px;height:10px;line-height:10px;font-size:10px;white-space:pre;color:#000;left:477px;width:40px;text-align:right;">0</div><div style="position:absolute;top:890.71px;height:10.5px;line-height:10.5px;font-size:10.5px;white-space:pre;color:#000;font-weight:bold;letter-spacing:0.5px;left:477px;width:40px;text-align:right;">8</div><div style="position:absolute;top:866.54px;height:10px;line-height:10px;font-size:10px;white-space:pre;color:#000;left:408.78516796875px;width:100px;text-align:right;">Billable :</div><div style="position:absolute;top:878.54px;height:10px;line-height:10px;font-size:10px;white-space:pre;color:#000;left:408.78516796875px;width:100px;text-align:right;">Not billable :</div><div style="position:absolute;top:890.71px;height:10.5px;line-height:10.5px;font-size:10.5px;white-space:pre;color:#000;font-weight:bold;letter-spacing:0.4px;left:408.78516796875px;width:100px;text-align:right;">Total :</div><div style="position:absolute;top:866.54px;height:10px;line-height:10px;font-size:10px;white-space:pre;color:#000;left:649px;width:40px;text-align:right;">6.25</div><div style="position:absolute;top:878.54px;height:10px;line-height:10px;font-size:10px;white-space:pre;color:#000;left:649px;width:40px;text-align:right;">2</div><div style="position:absolute;top:890.71px;height:10.5px;line-height:10.5px;font-size:10.5px;white-space:pre;color:#000;font-weight:bold;letter-spacing:0.5px;left:649px;width:40px;text-align:right;">8.25</div><div style="position:absolute;top:866.54px;height:10px;line-height:10px;font-size:10px;white-space:pre;color:#000;left:564.0009179687501px;width:100px;text-align:right;">Billable :</div><div style="position:absolute;top:878.54px;height:10px;line-height:10px;font-size:10px;white-space:pre;color:#000;left:564.0009179687501px;width:100px;text-align:right;">Not billable :</div><div style="position:absolute;top:890.71px;height:10.5px;line-height:10.5px;font-size:10.5px;white-space:pre;color:#000;font-weight:bold;letter-spacing:0.4px;left:564.0009179687501px;width:100px;text-align:right;">Total :</div><div style="position:absolute;top:866.54px;height:10px;line-height:10px;font-size:10px;white-space:pre;color:#000;left:821px;width:40px;text-align:right;">7.5</div><div style="position:absolute;top:878.54px;height:10px;line-height:10px;font-size:10px;white-space:pre;color:#000;left:821px;width:40px;text-align:right;">0</div><div style="position:absolute;top:890.71px;height:10.5px;line-height:10.5px;font-size:10.5px;white-space:pre;color:#000;font-weight:bold;letter-spacing:0.5px;left:821px;width:40px;text-align:right;">7.5</div><div style="position:absolute;top:866.54px;height:10px;line-height:10px;font-size:10px;white-space:pre;color:#000;left:742.71575px;width:100px;text-align:right;">Billable :</div><div style="position:absolute;top:878.54px;height:10px;line-height:10px;font-size:10px;white-space:pre;color:#000;left:742.71575px;width:100px;text-align:right;">Not billable :</div><div style="position:absolute;top:890.71px;height:10.5px;line-height:10.5px;font-size:10.5px;white-space:pre;color:#000;font-weight:bold;letter-spacing:0.4px;left:742.71575px;width:100px;text-align:right;">Total :</div><div style="position:absolute;top:866.54px;height:10px;line-height:10px;font-size:10px;white-space:pre;color:#000;left:993px;width:40px;text-align:right;">0</div><div style="position:absolute;top:878.54px;height:10px;line-height:10px;font-size:10px;white-space:pre;color:#000;left:993px;width:40px;text-align:right;">7.5</div><div style="position:absolute;top:890.71px;height:10.5px;line-height:10.5px;font-size:10.5px;white-space:pre;color:#000;font-weight:bold;letter-spacing:0.5px;left:993px;width:40px;text-align:right;">7.5</div><div style="position:absolute;top:866.54px;height:10px;line-height:10px;font-size:10px;white-space:pre;color:#000;left:914.71575px;width:100px;text-align:right;">Billable :</div><div style="position:absolute;top:878.54px;height:10px;line-height:10px;font-size:10px;white-space:pre;color:#000;left:914.71575px;width:100px;text-align:right;">Not billable :</div><div style="position:absolute;top:890.71px;height:10.5px;line-height:10.5px;font-size:10.5px;white-space:pre;color:#000;font-weight:bold;letter-spacing:0.4px;left:914.71575px;width:100px;text-align:right;">Total :</div><div style="position:absolute;top:866.54px;height:10px;line-height:10px;font-size:10px;white-space:pre;color:#000;left:1165px;width:40px;text-align:right;">0</div><div style="position:absolute;top:878.54px;height:10px;line-height:10px;font-size:10px;white-space:pre;color:#000;left:1165px;width:40px;text-align:right;">0</div><div style="position:absolute;top:890.71px;height:10.5px;line-height:10.5px;font-size:10.5px;white-space:pre;color:#000;font-weight:bold;letter-spacing:0.5px;left:1165px;width:40px;text-align:right;">0</div><div style="position:absolute;top:866.54px;height:10px;line-height:10px;font-size:10px;white-space:pre;color:#000;left:1096.78516796875px;width:100px;text-align:right;">Billable :</div><div style="position:absolute;top:878.54px;height:10px;line-height:10px;font-size:10px;white-space:pre;color:#000;left:1096.78516796875px;width:100px;text-align:right;">Not billable :</div><div style="position:absolute;top:890.71px;height:10.5px;line-height:10.5px;font-size:10.5px;white-space:pre;color:#000;font-weight:bold;letter-spacing:0.4px;left:1096.78516796875px;width:100px;text-align:right;">Total :</div><div style="position:absolute;top:866.54px;height:10px;line-height:10px;font-size:10px;white-space:pre;color:#000;left:1338px;width:40px;text-align:right;">29.5</div><div style="position:absolute;top:878.54px;height:10px;line-height:10px;font-size:10px;white-space:pre;color:#000;left:1338px;width:40px;text-align:right;">9.5</div><div style="position:absolute;top:890.71px;height:10.5px;line-height:10.5px;font-size:10.5px;white-space:pre;color:#000;font-weight:bold;letter-spacing:0.5px;left:1338px;width:40px;text-align:right;">39</div><div style="position:absolute;top:866.54px;height:10px;line-height:10px;font-size:10px;white-space:pre;color:#000;left:1257.0390625px;width:100px;text-align:right;">Billable :</div><div style="position:absolute;top:878.54px;height:10px;line-height:10px;font-size:10px;white-space:pre;color:#000;left:1257.0390625px;width:100px;text-align:right;">Not billable :</div><div style="position:absolute;top:890.71px;height:10.5px;line-height:10.5px;font-size:10.5px;white-space:pre;color:#000;font-weight:bold;letter-spacing:0.4px;left:1257.0390625px;width:100px;text-align:right;">Total :</div><div style="position:absolute;top:916.03px;height:10.6px;line-height:10.6px;font-size:10.6px;white-space:pre;color:#000;left:1053px;width:150px;text-align:right;">Display mode</div><div style="position:absolute;left:1229px;top:910px;width:143px;height:19px;border:1px solid #8E9A9E;background:#fff;"></div><div style="position:absolute;top:916.03px;height:10.6px;line-height:10.6px;font-size:10.6px;white-space:pre;color:#000;left:1232.5px;">OroTimesheet 7</div><svg style="position:absolute;left:1356px;top:912px" width="15" height="17" viewBox="0 0 15 17">
<defs><linearGradient id="cbc3" x1="0" y1="0" x2="1" y2="1"><stop offset="0" stop-color="#D2DCF8"/><stop offset="1" stop-color="#B0C4F4"/></linearGradient></defs>
<rect x="0" y="0" width="15" height="17" rx="1.5" fill="url(#cbc3)"/>
<path d="M4.0 6.5 L8.0 10.5 L12.0 6.5" stroke="#4D6185" stroke-width="2.6" fill="none"/>
</svg><div style="position:absolute;left:181px;top:214px;width:158px;height:131px;border:1px solid #8E8E8E;background:linear-gradient(#FFFFFF 0%,#FFFFFF 40%,#F0F0F0 65%,#DCDCDC 100%);box-shadow:1px 1px 2px rgba(0,0,0,0.25);"></div><svg style="position:absolute;left:298px;top:219px" width="17" height="17" viewBox="0 0 17 17">
<path d="M1.5 0.5 L8.5 0.5 L12.5 4 L12.5 15.5 L1.5 15.5 Z" fill="#FAFAFC" stroke="#8E8E8E" stroke-width="1"/>
<path d="M8.5 0.5 L8.5 4 L12.5 4" fill="#E4E4E8" stroke="#9A9A9A" stroke-width="0.7"/>
<path d="M4 5.5 L8 5.5 M3 7.5 L9 7.5 M3 9.5 L7 9.5 M3 11.5 L6 11.5" stroke="#B4B4C0" stroke-width="1"/>
<path d="M4.5 15.5 L5.5 12.5 L12.5 5.5 L14.5 7.5 L7.5 14.5 Z" fill="#E8D850" stroke="#6A5A10" stroke-width="0.8"/>
<path d="M12.5 5.5 L13.5 4.5 Q14.5 4 15.5 5 Q16 6 15.5 6.5 L14.5 7.5 Z" fill="#8A4A30"/>
<path d="M4.5 15.5 L5 13.8 L6.2 15 Z" fill="#202020"/>
</svg><svg style="position:absolute;left:319px;top:219px" width="17" height="17" viewBox="0 0 17 17">
<path d="M1.5 0.5 L8.5 0.5 L12.5 4 L12.5 15.5 L1.5 15.5 Z" fill="#FAFAFC" stroke="#8E8E8E" stroke-width="1"/>
<path d="M8.5 0.5 L8.5 4 L12.5 4" fill="#E4E4E8" stroke="#9A9A9A" stroke-width="0.7"/>
<path d="M4 5.5 L8 5.5 M3 7.5 L9 7.5 M3 9.5 L7 9.5 M3 11.5 L6 11.5" stroke="#B4C0B4" stroke-width="1"/>
<path d="M6.5 7.5 L14 15 M14 7.5 L6.5 15" stroke="#C01020" stroke-width="2.4"/>
</svg><svg style="position:absolute;left:187px;top:219px" width="16" height="16" viewBox="0 0 16 16">
<defs><radialGradient id="cg187219" cx="0.35" cy="0.35" r="0.75"><stop offset="0" stop-color="#E8E8E8"/><stop offset="0.6" stop-color="#B8B8B8"/><stop offset="1" stop-color="#909090"/></radialGradient></defs>
<circle cx="8" cy="8" r="7.5" fill="url(#cg187219)" stroke="#7A7A7A" stroke-width="1"/>
<text x="8" y="12.3" font-family="Liberation Sans" font-weight="bold" font-size="12.5" fill="#FAFAFA" stroke="#8A8A8A" stroke-width="0.4" text-anchor="middle">$</text>
</svg><div style="position:absolute;top:240.11px;height:10.5px;line-height:10.5px;font-size:10.5px;white-space:pre;color:#000;font-weight:bold;letter-spacing:0.15px;left:186.5px;">Biofiltrage - SaniGreen</div><div style="position:absolute;top:257.3px;height:9.1px;line-height:9.1px;font-size:9.1px;white-space:pre;color:#000;left:187px;word-spacing:1px;">No sub-project</div><div style="position:absolute;top:272.3px;height:9.1px;line-height:9.1px;font-size:9.1px;white-space:pre;color:#000;left:187px;word-spacing:1px;">SaniGreen Ltd.</div><div style="position:absolute;top:287.3px;height:9.1px;line-height:9.1px;font-size:9.1px;white-space:pre;color:#000;left:187px;word-spacing:1px;">Management</div><div style="position:absolute;top:301.34px;height:12px;line-height:12px;font-size:12px;white-space:pre;color:#000;left:313.5px;width:20px;text-align:right;">h</div><div style="position:absolute;top:302.61px;height:10.5px;line-height:10.5px;font-size:10.5px;white-space:pre;color:#000;font-weight:bold;letter-spacing:0.6px;left:264.5px;width:60px;text-align:right;">4.25</div><div style="position:absolute;top:321.21px;height:9.2px;line-height:9.2px;font-size:9.2px;white-space:pre;color:#000;font-style:italic;left:187px;word-spacing:0.6px;">Meeting with the customer</div><div style="position:absolute;left:181px;top:355px;width:158px;height:131px;border:1px solid #8E8E8E;background:linear-gradient(#FFFFFF 0%,#FFFFFF 40%,#F0F0F0 65%,#DCDCDC 100%);box-shadow:1px 1px 2px rgba(0,0,0,0.25);"></div><svg style="position:absolute;left:298px;top:360px" width="17" height="17" viewBox="0 0 17 17">
<path d="M1.5 0.5 L8.5 0.5 L12.5 4 L12.5 15.5 L1.5 15.5 Z" fill="#FAFAFC" stroke="#8E8E8E" stroke-width="1"/>
<path d="M8.5 0.5 L8.5 4 L12.5 4" fill="#E4E4E8" stroke="#9A9A9A" stroke-width="0.7"/>
<path d="M4 5.5 L8 5.5 M3 7.5 L9 7.5 M3 9.5 L7 9.5 M3 11.5 L6 11.5" stroke="#B4B4C0" stroke-width="1"/>
<path d="M4.5 15.5 L5.5 12.5 L12.5 5.5 L14.5 7.5 L7.5 14.5 Z" fill="#E8D850" stroke="#6A5A10" stroke-width="0.8"/>
<path d="M12.5 5.5 L13.5 4.5 Q14.5 4 15.5 5 Q16 6 15.5 6.5 L14.5 7.5 Z" fill="#8A4A30"/>
<path d="M4.5 15.5 L5 13.8 L6.2 15 Z" fill="#202020"/>
</svg><svg style="position:absolute;left:319px;top:360px" width="17" height="17" viewBox="0 0 17 17">
<path d="M1.5 0.5 L8.5 0.5 L12.5 4 L12.5 15.5 L1.5 15.5 Z" fill="#FAFAFC" stroke="#8E8E8E" stroke-width="1"/>
<path d="M8.5 0.5 L8.5 4 L12.5 4" fill="#E4E4E8" stroke="#9A9A9A" stroke-width="0.7"/>
<path d="M4 5.5 L8 5.5 M3 7.5 L9 7.5 M3 9.5 L7 9.5 M3 11.5 L6 11.5" stroke="#B4C0B4" stroke-width="1"/>
<path d="M6.5 7.5 L14 15 M14 7.5 L6.5 15" stroke="#C01020" stroke-width="2.4"/>
</svg><div style="position:absolute;top:381.11px;height:10.5px;line-height:10.5px;font-size:10.5px;white-space:pre;color:#000;font-weight:bold;letter-spacing:0.15px;left:186.5px;">Recycling tank - Alcanoe</div><div style="position:absolute;top:398.3px;height:9.1px;line-height:9.1px;font-size:9.1px;white-space:pre;color:#000;left:187px;word-spacing:1px;">Analysis</div><div style="position:absolute;top:413.3px;height:9.1px;line-height:9.1px;font-size:9.1px;white-space:pre;color:#000;left:187px;word-spacing:1px;">Alcanoe Group</div><div style="position:absolute;top:428.3px;height:9.1px;line-height:9.1px;font-size:9.1px;white-space:pre;color:#000;left:187px;word-spacing:1px;">Analysis</div><div style="position:absolute;top:442.34px;height:12px;line-height:12px;font-size:12px;white-space:pre;color:#000;left:313.5px;width:20px;text-align:right;">h</div><div style="position:absolute;top:443.61px;height:10.5px;line-height:10.5px;font-size:10.5px;white-space:pre;color:#000;font-weight:bold;letter-spacing:0.6px;left:264.5px;width:60px;text-align:right;">3.5</div><div style="position:absolute;top:462.21px;height:9.2px;line-height:9.2px;font-size:9.2px;white-space:pre;color:#000;font-style:italic;left:187px;word-spacing:0.6px;">Studying new plans and made</div><div style="position:absolute;top:473.21px;height:9.2px;line-height:9.2px;font-size:9.2px;white-space:pre;color:#000;font-style:italic;left:187px;word-spacing:0.6px;">changes according to last meeting.</div><div style="position:absolute;left:353px;top:214px;width:158px;height:103px;border:1px solid #8E8E8E;background:linear-gradient(#FFFFFF 0%,#FFFFFF 40%,#F0F0F0 65%,#DCDCDC 100%);box-shadow:1px 1px 2px rgba(0,0,0,0.25);"></div><svg style="position:absolute;left:470px;top:219px" width="17" height="17" viewBox="0 0 17 17">
<path d="M1.5 0.5 L8.5 0.5 L12.5 4 L12.5 15.5 L1.5 15.5 Z" fill="#FAFAFC" stroke="#8E8E8E" stroke-width="1"/>
<path d="M8.5 0.5 L8.5 4 L12.5 4" fill="#E4E4E8" stroke="#9A9A9A" stroke-width="0.7"/>
<path d="M4 5.5 L8 5.5 M3 7.5 L9 7.5 M3 9.5 L7 9.5 M3 11.5 L6 11.5" stroke="#B4B4C0" stroke-width="1"/>
<path d="M4.5 15.5 L5.5 12.5 L12.5 5.5 L14.5 7.5 L7.5 14.5 Z" fill="#E8D850" stroke="#6A5A10" stroke-width="0.8"/>
<path d="M12.5 5.5 L13.5 4.5 Q14.5 4 15.5 5 Q16 6 15.5 6.5 L14.5 7.5 Z" fill="#8A4A30"/>
<path d="M4.5 15.5 L5 13.8 L6.2 15 Z" fill="#202020"/>
</svg><svg style="position:absolute;left:491px;top:219px" width="17" height="17" viewBox="0 0 17 17">
<path d="M1.5 0.5 L8.5 0.5 L12.5 4 L12.5 15.5 L1.5 15.5 Z" fill="#FAFAFC" stroke="#8E8E8E" stroke-width="1"/>
<path d="M8.5 0.5 L8.5 4 L12.5 4" fill="#E4E4E8" stroke="#9A9A9A" stroke-width="0.7"/>
<path d="M4 5.5 L8 5.5 M3 7.5 L9 7.5 M3 9.5 L7 9.5 M3 11.5 L6 11.5" stroke="#B4C0B4" stroke-width="1"/>
<path d="M6.5 7.5 L14 15 M14 7.5 L6.5 15" stroke="#C01020" stroke-width="2.4"/>
</svg><div style="position:absolute;top:240.11px;height:10.5px;line-height:10.5px;font-size:10.5px;white-space:pre;color:#000;font-weight:bold;letter-spacing:0.15px;left:358.5px;">Biofiltrage - SaniGreen</div><div style="position:absolute;top:257.3px;height:9.1px;line-height:9.1px;font-size:9.1px;white-space:pre;color:#000;left:359px;word-spacing:1px;">No sub-project</div><div style="position:absolute;top:272.3px;height:9.1px;line-height:9.1px;font-size:9.1px;white-space:pre;color:#000;left:359px;word-spacing:1px;">SaniGreen Ltd.</div><div style="position:absolute;top:287.3px;height:9.1px;line-height:9.1px;font-size:9.1px;white-space:pre;color:#000;left:359px;word-spacing:1px;">Feasibility study</div><div style="position:absolute;top:301.34px;height:12px;line-height:12px;font-size:12px;white-space:pre;color:#000;left:485.5px;width:20px;text-align:right;">h</div><div style="position:absolute;top:302.61px;height:10.5px;line-height:10.5px;font-size:10.5px;white-space:pre;color:#000;font-weight:bold;letter-spacing:0.6px;left:436.5px;width:60px;text-align:right;">8</div><div style="position:absolute;left:525px;top:214px;width:158px;height:103px;border:1px solid #8E8E8E;background:linear-gradient(#FFFFFF 0%,#FFFFFF 40%,#F0F0F0 65%,#DCDCDC 100%);box-shadow:1px 1px 2px rgba(0,0,0,0.25);"></div><svg style="position:absolute;left:642px;top:219px" width="17" height="17" viewBox="0 0 17 17">
<path d="M1.5 0.5 L8.5 0.5 L12.5 4 L12.5 15.5 L1.5 15.5 Z" fill="#FAFAFC" stroke="#8E8E8E" stroke-width="1"/>
<path d="M8.5 0.5 L8.5 4 L12.5 4" fill="#E4E4E8" stroke="#9A9A9A" stroke-width="0.7"/>
<path d="M4 5.5 L8 5.5 M3 7.5 L9 7.5 M3 9.5 L7 9.5 M3 11.5 L6 11.5" stroke="#B4B4C0" stroke-width="1"/>
<path d="M4.5 15.5 L5.5 12.5 L12.5 5.5 L14.5 7.5 L7.5 14.5 Z" fill="#E8D850" stroke="#6A5A10" stroke-width="0.8"/>
<path d="M12.5 5.5 L13.5 4.5 Q14.5 4 15.5 5 Q16 6 15.5 6.5 L14.5 7.5 Z" fill="#8A4A30"/>
<path d="M4.5 15.5 L5 13.8 L6.2 15 Z" fill="#202020"/>
</svg><svg style="position:absolute;left:663px;top:219px" width="17" height="17" viewBox="0 0 17 17">
<path d="M1.5 0.5 L8.5 0.5 L12.5 4 L12.5 15.5 L1.5 15.5 Z" fill="#FAFAFC" stroke="#8E8E8E" stroke-width="1"/>
<path d="M8.5 0.5 L8.5 4 L12.5 4" fill="#E4E4E8" stroke="#9A9A9A" stroke-width="0.7"/>
<path d="M4 5.5 L8 5.5 M3 7.5 L9 7.5 M3 9.5 L7 9.5 M3 11.5 L6 11.5" stroke="#B4C0B4" stroke-width="1"/>
<path d="M6.5 7.5 L14 15 M14 7.5 L6.5 15" stroke="#C01020" stroke-width="2.4"/>
</svg><div style="position:absolute;top:240.11px;height:10.5px;line-height:10.5px;font-size:10.5px;white-space:pre;color:#000;font-weight:bold;letter-spacing:0.15px;left:530.5px;">Central repair - Hydro1</div><div style="position:absolute;top:257.3px;height:9.1px;line-height:9.1px;font-size:9.1px;white-space:pre;color:#000;left:531px;word-spacing:1px;">Arrangement Hydro power</div><div style="position:absolute;top:272.3px;height:9.1px;line-height:9.1px;font-size:9.1px;white-space:pre;color:#000;left:531px;word-spacing:1px;">Hydro-Demo</div><div style="position:absolute;top:287.3px;height:9.1px;line-height:9.1px;font-size:9.1px;white-space:pre;color:#000;left:531px;word-spacing:1px;">Management</div><div style="position:absolute;top:301.34px;height:12px;line-height:12px;font-size:12px;white-space:pre;color:#000;left:657.5px;width:20px;text-align:right;">h</div><div style="position:absolute;top:302.61px;height:10.5px;line-height:10.5px;font-size:10.5px;white-space:pre;color:#000;font-weight:bold;letter-spacing:0.6px;left:608.5px;width:60px;text-align:right;">4</div><div style="position:absolute;left:525px;top:327px;width:158px;height:131px;border:1px solid #8E8E8E;background:linear-gradient(#FFFFFF 0%,#FFFFFF 40%,#F0F0F0 65%,#DCDCDC 100%);box-shadow:1px 1px 2px rgba(0,0,0,0.25);"></div><svg style="position:absolute;left:642px;top:332px" width="17" height="17" viewBox="0 0 17 17">
<path d="M1.5 0.5 L8.5 0.5 L12.5 4 L12.5 15.5 L1.5 15.5 Z" fill="#FAFAFC" stroke="#8E8E8E" stroke-width="1"/>
<path d="M8.5 0.5 L8.5 4 L12.5 4" fill="#E4E4E8" stroke="#9A9A9A" stroke-width="0.7"/>
<path d="M4 5.5 L8 5.5 M3 7.5 L9 7.5 M3 9.5 L7 9.5 M3 11.5 L6 11.5" stroke="#B4B4C0" stroke-width="1"/>
<path d="M4.5 15.5 L5.5 12.5 L12.5 5.5 L14.5 7.5 L7.5 14.5 Z" fill="#E8D850" stroke="#6A5A10" stroke-width="0.8"/>
<path d="M12.5 5.5 L13.5 4.5 Q14.5 4 15.5 5 Q16 6 15.5 6.5 L14.5 7.5 Z" fill="#8A4A30"/>
<path d="M4.5 15.5 L5 13.8 L6.2 15 Z" fill="#202020"/>
</svg><svg style="position:absolute;left:663px;top:332px" width="17" height="17" viewBox="0 0 17 17">
<path d="M1.5 0.5 L8.5 0.5 L12.5 4 L12.5 15.5 L1.5 15.5 Z" fill="#FAFAFC" stroke="#8E8E8E" stroke-width="1"/>
<path d="M8.5 0.5 L8.5 4 L12.5 4" fill="#E4E4E8" stroke="#9A9A9A" stroke-width="0.7"/>
<path d="M4 5.5 L8 5.5 M3 7.5 L9 7.5 M3 9.5 L7 9.5 M3 11.5 L6 11.5" stroke="#B4C0B4" stroke-width="1"/>
<path d="M6.5 7.5 L14 15 M14 7.5 L6.5 15" stroke="#C01020" stroke-width="2.4"/>
</svg><div style="position:absolute;top:353.11px;height:10.5px;line-height:10.5px;font-size:10.5px;white-space:pre;color:#000;font-weight:bold;letter-spacing:0.15px;left:530.5px;">Central repair - Hydro1</div><div style="position:absolute;top:370.3px;height:9.1px;line-height:9.1px;font-size:9.1px;white-space:pre;color:#000;left:531px;word-spacing:1px;">Arrangement Hydro power</div><div style="position:absolute;top:385.3px;height:9.1px;line-height:9.1px;font-size:9.1px;white-space:pre;color:#000;left:531px;word-spacing:1px;">Hydro-Demo</div><div style="position:absolute;top:400.3px;height:9.1px;line-height:9.1px;font-size:9.1px;white-space:pre;color:#000;left:531px;word-spacing:1px;">Scheduling</div><div style="position:absolute;top:414.34px;height:12px;line-height:12px;font-size:12px;white-space:pre;color:#000;left:657.5px;width:20px;text-align:right;">h</div><div style="position:absolute;top:415.61px;height:10.5px;line-height:10.5px;font-size:10.5px;white-space:pre;color:#000;font-weight:bold;letter-spacing:0.6px;left:608.5px;width:60px;text-align:right;">2.25</div><div style="position:absolute;top:434.21px;height:9.2px;line-height:9.2px;font-size:9.2px;white-space:pre;color:#000;font-style:italic;left:531px;word-spacing:0.6px;">Scheduling ressources for next</div><div style="position:absolute;top:445.21px;height:9.2px;line-height:9.2px;font-size:9.2px;white-space:pre;color:#000;font-style:italic;left:531px;word-spacing:0.6px;">phase.</div><div style="position:absolute;left:525px;top:468px;width:158px;height:131px;border:1px solid #8E8E8E;background:linear-gradient(#FFFFFF 0%,#FFFFFF 40%,#F0F0F0 65%,#DCDCDC 100%);box-shadow:1px 1px 2px rgba(0,0,0,0.25);"></div><svg style="position:absolute;left:642px;top:473px" width="17" height="17" viewBox="0 0 17 17">
<path d="M1.5 0.5 L8.5 0.5 L12.5 4 L12.5 15.5 L1.5 15.5 Z" fill="#FAFAFC" stroke="#8E8E8E" stroke-width="1"/>
<path d="M8.5 0.5 L8.5 4 L12.5 4" fill="#E4E4E8" stroke="#9A9A9A" stroke-width="0.7"/>
<path d="M4 5.5 L8 5.5 M3 7.5 L9 7.5 M3 9.5 L7 9.5 M3 11.5 L6 11.5" stroke="#B4B4C0" stroke-width="1"/>
<path d="M4.5 15.5 L5.5 12.5 L12.5 5.5 L14.5 7.5 L7.5 14.5 Z" fill="#E8D850" stroke="#6A5A10" stroke-width="0.8"/>
<path d="M12.5 5.5 L13.5 4.5 Q14.5 4 15.5 5 Q16 6 15.5 6.5 L14.5 7.5 Z" fill="#8A4A30"/>
<path d="M4.5 15.5 L5 13.8 L6.2 15 Z" fill="#202020"/>
</svg><svg style="position:absolute;left:663px;top:473px" width="17" height="17" viewBox="0 0 17 17">
<path d="M1.5 0.5 L8.5 0.5 L12.5 4 L12.5 15.5 L1.5 15.5 Z" fill="#FAFAFC" stroke="#8E8E8E" stroke-width="1"/>
<path d="M8.5 0.5 L8.5 4 L12.5 4" fill="#E4E4E8" stroke="#9A9A9A" stroke-width="0.7"/>
<path d="M4 5.5 L8 5.5 M3 7.5 L9 7.5 M3 9.5 L7 9.5 M3 11.5 L6 11.5" stroke="#B4C0B4" stroke-width="1"/>
<path d="M6.5 7.5 L14 15 M14 7.5 L6.5 15" stroke="#C01020" stroke-width="2.4"/>
</svg><svg style="position:absolute;left:531px;top:473px" width="16" height="16" viewBox="0 0 16 16">
<defs><radialGradient id="cg531473" cx="0.35" cy="0.35" r="0.75"><stop offset="0" stop-color="#E8E8E8"/><stop offset="0.6" stop-color="#B8B8B8"/><stop offset="1" stop-color="#909090"/></radialGradient></defs>
<circle cx="8" cy="8" r="7.5" fill="url(#cg531473)" stroke="#7A7A7A" stroke-width="1"/>
<text x="8" y="12.3" font-family="Liberation Sans" font-weight="bold" font-size="12.5" fill="#FAFAFA" stroke="#8A8A8A" stroke-width="0.4" text-anchor="middle">$</text>
</svg><div style="position:absolute;top:494.11px;height:10.5px;line-height:10.5px;font-size:10.5px;white-space:pre;color:#000;font-weight:bold;letter-spacing:0.15px;left:530.5px;">Recycling tank - Alcanoe</div><div style="position:absolute;top:511.3px;height:9.1px;line-height:9.1px;font-size:9.1px;white-space:pre;color:#000;left:531px;word-spacing:1px;">Analysis</div><div style="position:absolute;top:526.3px;height:9.1px;line-height:9.1px;font-size:9.1px;white-space:pre;color:#000;left:531px;word-spacing:1px;">Alcanoe Group</div><div style="position:absolute;top:541.3px;height:9.1px;line-height:9.1px;font-size:9.1px;white-space:pre;color:#000;left:531px;word-spacing:1px;">Analysis</div><div style="position:absolute;top:555.34px;height:12px;line-height:12px;font-size:12px;white-space:pre;color:#000;left:657.5px;width:20px;text-align:right;">h</div><div style="position:absolute;top:556.61px;height:10.5px;line-height:10.5px;font-size:10.5px;white-space:pre;color:#000;font-weight:bold;letter-spacing:0.6px;left:608.5px;width:60px;text-align:right;">2</div><div style="position:absolute;top:575.21px;height:9.2px;line-height:9.2px;font-size:9.2px;white-space:pre;color:#000;font-style:italic;left:531px;word-spacing:0.6px;">Meeting</div><div style="position:absolute;left:697px;top:214px;width:158px;height:103px;border:1px solid #8E8E8E;background:linear-gradient(#FFFFFF 0%,#FFFFFF 40%,#F0F0F0 65%,#DCDCDC 100%);box-shadow:1px 1px 2px rgba(0,0,0,0.25);"></div><svg style="position:absolute;left:814px;top:219px" width="17" height="17" viewBox="0 0 17 17">
<path d="M1.5 0.5 L8.5 0.5 L12.5 4 L12.5 15.5 L1.5 15.5 Z" fill="#FAFAFC" stroke="#8E8E8E" stroke-width="1"/>
<path d="M8.5 0.5 L8.5 4 L12.5 4" fill="#E4E4E8" stroke="#9A9A9A" stroke-width="0.7"/>
<path d="M4 5.5 L8 5.5 M3 7.5 L9 7.5 M3 9.5 L7 9.5 M3 11.5 L6 11.5" stroke="#B4B4C0" stroke-width="1"/>
<path d="M4.5 15.5 L5.5 12.5 L12.5 5.5 L14.5 7.5 L7.5 14.5 Z" fill="#E8D850" stroke="#6A5A10" stroke-width="0.8"/>
<path d="M12.5 5.5 L13.5 4.5 Q14.5 4 15.5 5 Q16 6 15.5 6.5 L14.5 7.5 Z" fill="#8A4A30"/>
<path d="M4.5 15.5 L5 13.8 L6.2 15 Z" fill="#202020"/>
</svg><svg style="position:absolute;left:835px;top:219px" width="17" height="17" viewBox="0 0 17 17">
<path d="M1.5 0.5 L8.5 0.5 L12.5 4 L12.5 15.5 L1.5 15.5 Z" fill="#FAFAFC" stroke="#8E8E8E" stroke-width="1"/>
<path d="M8.5 0.5 L8.5 4 L12.5 4" fill="#E4E4E8" stroke="#9A9A9A" stroke-width="0.7"/>
<path d="M4 5.5 L8 5.5 M3 7.5 L9 7.5 M3 9.5 L7 9.5 M3 11.5 L6 11.5" stroke="#B4C0B4" stroke-width="1"/>
<path d="M6.5 7.5 L14 15 M14 7.5 L6.5 15" stroke="#C01020" stroke-width="2.4"/>
</svg><div style="position:absolute;top:240.11px;height:10.5px;line-height:10.5px;font-size:10.5px;white-space:pre;color:#000;font-weight:bold;letter-spacing:0.15px;left:702.5px;">Recycling tank - Alcanoe</div><div style="position:absolute;top:257.3px;height:9.1px;line-height:9.1px;font-size:9.1px;white-space:pre;color:#000;left:703px;word-spacing:1px;">Analysis</div><div style="position:absolute;top:272.3px;height:9.1px;line-height:9.1px;font-size:9.1px;white-space:pre;color:#000;left:703px;word-spacing:1px;">Alcanoe Group</div><div style="position:absolute;top:287.3px;height:9.1px;line-height:9.1px;font-size:9.1px;white-space:pre;color:#000;left:703px;word-spacing:1px;">Analysis</div><div style="position:absolute;top:301.34px;height:12px;line-height:12px;font-size:12px;white-space:pre;color:#000;left:829.5px;width:20px;text-align:right;">h</div><div style="position:absolute;top:302.61px;height:10.5px;line-height:10.5px;font-size:10.5px;white-space:pre;color:#000;font-weight:bold;letter-spacing:0.6px;left:780.5px;width:60px;text-align:right;">4</div><div style="position:absolute;left:697px;top:327px;width:158px;height:131px;border:1px solid #6E97C8;background:linear-gradient(#FFFFFF 0%,#FFFFFF 45%,#D5E8FB 70%,#A9D0F5 100%);box-shadow:1px 1px 2px rgba(0,0,0,0.25);"></div><svg style="position:absolute;left:814px;top:332px" width="17" height="17" viewBox="0 0 17 17">
<path d="M1.5 0.5 L8.5 0.5 L12.5 4 L12.5 15.5 L1.5 15.5 Z" fill="#FAFAFC" stroke="#8E8E8E" stroke-width="1"/>
<path d="M8.5 0.5 L8.5 4 L12.5 4" fill="#E4E4E8" stroke="#9A9A9A" stroke-width="0.7"/>
<path d="M4 5.5 L8 5.5 M3 7.5 L9 7.5 M3 9.5 L7 9.5 M3 11.5 L6 11.5" stroke="#B4B4C0" stroke-width="1"/>
<path d="M4.5 15.5 L5.5 12.5 L12.5 5.5 L14.5 7.5 L7.5 14.5 Z" fill="#E8D850" stroke="#6A5A10" stroke-width="0.8"/>
<path d="M12.5 5.5 L13.5 4.5 Q14.5 4 15.5 5 Q16 6 15.5 6.5 L14.5 7.5 Z" fill="#8A4A30"/>
<path d="M4.5 15.5 L5 13.8 L6.2 15 Z" fill="#202020"/>
</svg><svg style="position:absolute;left:835px;top:332px" width="17" height="17" viewBox="0 0 17 17">
<path d="M1.5 0.5 L8.5 0.5 L12.5 4 L12.5 15.5 L1.5 15.5 Z" fill="#FAFAFC" stroke="#8E8E8E" stroke-width="1"/>
<path d="M8.5 0.5 L8.5 4 L12.5 4" fill="#E4E4E8" stroke="#9A9A9A" stroke-width="0.7"/>
<path d="M4 5.5 L8 5.5 M3 7.5 L9 7.5 M3 9.5 L7 9.5 M3 11.5 L6 11.5" stroke="#B4C0B4" stroke-width="1"/>
<path d="M6.5 7.5 L14 15 M14 7.5 L6.5 15" stroke="#C01020" stroke-width="2.4"/>
</svg><div style="position:absolute;top:353.11px;height:10.5px;line-height:10.5px;font-size:10.5px;white-space:pre;color:#000;font-weight:bold;letter-spacing:0.15px;left:702.5px;">Biofiltrage - SaniGreen</div><div style="position:absolute;top:370.3px;height:9.1px;line-height:9.1px;font-size:9.1px;white-space:pre;color:#000;left:703px;word-spacing:1px;">No sub-project</div><div style="position:absolute;top:385.3px;height:9.1px;line-height:9.1px;font-size:9.1px;white-space:pre;color:#000;left:703px;word-spacing:1px;">SaniGreen Ltd.</div><div style="position:absolute;top:400.3px;height:9.1px;line-height:9.1px;font-size:9.1px;white-space:pre;color:#000;left:703px;word-spacing:1px;">Management</div><div style="position:absolute;top:414.34px;height:12px;line-height:12px;font-size:12px;white-space:pre;color:#000;left:829.5px;width:20px;text-align:right;">h</div><div style="position:absolute;top:415.61px;height:10.5px;line-height:10.5px;font-size:10.5px;white-space:pre;color:#000;font-weight:bold;letter-spacing:0.6px;left:780.5px;width:60px;text-align:right;">3.5</div><div style="position:absolute;top:434.21px;height:9.2px;line-height:9.2px;font-size:9.2px;white-space:pre;color:#000;font-style:italic;left:703px;word-spacing:0.6px;">General management about new</div><div style="position:absolute;top:445.21px;height:9.2px;line-height:9.2px;font-size:9.2px;white-space:pre;color:#000;font-style:italic;left:703px;word-spacing:0.6px;">changes discussed at last meeting.</div><div style="position:absolute;left:869px;top:214px;width:158px;height:103px;border:1px solid #8E8E8E;background:linear-gradient(#FFFFFF 0%,#FFFFFF 40%,#F0F0F0 65%,#DCDCDC 100%);box-shadow:1px 1px 2px rgba(0,0,0,0.25);"></div><svg style="position:absolute;left:986px;top:219px" width="17" height="17" viewBox="0 0 17 17">
<path d="M1.5 0.5 L8.5 0.5 L12.5 4 L12.5 15.5 L1.5 15.5 Z" fill="#FAFAFC" stroke="#8E8E8E" stroke-width="1"/>
<path d="M8.5 0.5 L8.5 4 L12.5 4" fill="#E4E4E8" stroke="#9A9A9A" stroke-width="0.7"/>
<path d="M4 5.5 L8 5.5 M3 7.5 L9 7.5 M3 9.5 L7 9.5 M3 11.5 L6 11.5" stroke="#B4B4C0" stroke-width="1"/>
<path d="M4.5 15.5 L5.5 12.5 L12.5 5.5 L14.5 7.5 L7.5 14.5 Z" fill="#E8D850" stroke="#6A5A10" stroke-width="0.8"/>
<path d="M12.5 5.5 L13.5 4.5 Q14.5 4 15.5 5 Q16 6 15.5 6.5 L14.5 7.5 Z" fill="#8A4A30"/>
<path d="M4.5 15.5 L5 13.8 L6.2 15 Z" fill="#202020"/>
</svg><svg style="position:absolute;left:1007px;top:219px" width="17" height="17" viewBox="0 0 17 17">
<path d="M1.5 0.5 L8.5 0.5 L12.5 4 L12.5 15.5 L1.5 15.5 Z" fill="#FAFAFC" stroke="#8E8E8E" stroke-width="1"/>
<path d="M8.5 0.5 L8.5 4 L12.5 4" fill="#E4E4E8" stroke="#9A9A9A" stroke-width="0.7"/>
<path d="M4 5.5 L8 5.5 M3 7.5 L9 7.5 M3 9.5 L7 9.5 M3 11.5 L6 11.5" stroke="#B4C0B4" stroke-width="1"/>
<path d="M6.5 7.5 L14 15 M14 7.5 L6.5 15" stroke="#C01020" stroke-width="2.4"/>
</svg><div style="position:absolute;left:870px;top:234px;width:157px;height:20px;overflow:hidden;"><div style="position:absolute;top:6.11px;height:10.5px;line-height:10.5px;font-size:10.5px;white-space:pre;color:#000;font-weight:bold;letter-spacing:0.15px;left:4.5px;">Leave / Absence - Internal  Pr</div></div><div style="position:absolute;top:257.3px;height:9.1px;line-height:9.1px;font-size:9.1px;white-space:pre;color:#000;left:875px;word-spacing:1px;">Other</div><div style="position:absolute;top:272.3px;height:9.1px;line-height:9.1px;font-size:9.1px;white-space:pre;color:#000;left:875px;word-spacing:1px;">Engineering Consulting Demo</div><div style="position:absolute;top:287.3px;height:9.1px;line-height:9.1px;font-size:9.1px;white-space:pre;color:#000;left:875px;word-spacing:1px;">Default</div><div style="position:absolute;top:301.34px;height:12px;line-height:12px;font-size:12px;white-space:pre;color:#000;left:1001.5px;width:20px;text-align:right;">h</div><div style="position:absolute;top:302.61px;height:10.5px;line-height:10.5px;font-size:10.5px;white-space:pre;color:#000;font-weight:bold;letter-spacing:0.6px;left:952.5px;width:60px;text-align:right;">7.5</div><div style="position:absolute;left:1213px;top:214px;width:158px;height:34px;border:1px solid #8E8E8E;background:linear-gradient(#FFFFFF 0%,#FFFFFF 35%,#EFEFEF 65%,#DCDCDC 100%);box-shadow:1px 2px 2px rgba(0,0,0,0.25);"></div><div style="position:absolute;left:1214px;top:215px;width:157px;height:20px;overflow:hidden;"><div style="position:absolute;top:0.81px;height:10.5px;line-height:10.5px;font-size:10.5px;white-space:pre;color:#000;font-weight:bold;letter-spacing:0.15px;left:4.5px;">Biofiltrage - SaniGreen</div></div><div style="position:absolute;top:231.84px;height:12px;line-height:12px;font-size:12px;white-space:pre;color:#000;left:1345.5px;width:20px;text-align:right;">h</div><div style="position:absolute;top:233.11px;height:10.5px;line-height:10.5px;font-size:10.5px;white-space:pre;color:#000;font-weight:bold;letter-spacing:0.6px;left:1296.5px;width:60px;text-align:right;">15.75</div><div style="position:absolute;left:1213px;top:258px;width:158px;height:34px;border:1px solid #8E8E8E;background:linear-gradient(#FFFFFF 0%,#FFFFFF 35%,#EFEFEF 65%,#DCDCDC 100%);box-shadow:1px 2px 2px rgba(0,0,0,0.25);"></div><div style="position:absolute;left:1214px;top:259px;width:157px;height:20px;overflow:hidden;"><div style="position:absolute;top:0.81px;height:10.5px;line-height:10.5px;font-size:10.5px;white-space:pre;color:#000;font-weight:bold;letter-spacing:0.15px;left:4.5px;">Recycling tank - Alcanoe</div></div><div style="position:absolute;top:275.84px;height:12px;line-height:12px;font-size:12px;white-space:pre;color:#000;left:1345.5px;width:20px;text-align:right;">h</div><div style="position:absolute;top:277.11px;height:10.5px;line-height:10.5px;font-size:10.5px;white-space:pre;color:#000;font-weight:bold;letter-spacing:0.6px;left:1296.5px;width:60px;text-align:right;">9.5</div><div style="position:absolute;left:1213px;top:302px;width:158px;height:34px;border:1px solid #8E8E8E;background:linear-gradient(#FFFFFF 0%,#FFFFFF 35%,#EFEFEF 65%,#DCDCDC 100%);box-shadow:1px 2px 2px rgba(0,0,0,0.25);"></div><div style="position:absolute;left:1214px;top:303px;width:157px;height:20px;overflow:hidden;"><div style="position:absolute;top:0.81px;height:10.5px;line-height:10.5px;font-size:10.5px;white-space:pre;color:#000;font-weight:bold;letter-spacing:0.15px;left:4.5px;">Central repair - Hydro1</div></div><div style="position:absolute;top:319.84px;height:12px;line-height:12px;font-size:12px;white-space:pre;color:#000;left:1345.5px;width:20px;text-align:right;">h</div><div style="position:absolute;top:321.11px;height:10.5px;line-height:10.5px;font-size:10.5px;white-space:pre;color:#000;font-weight:bold;letter-spacing:0.6px;left:1296.5px;width:60px;text-align:right;">6.25</div><div style="position:absolute;left:1213px;top:346px;width:158px;height:34px;border:1px solid #8E8E8E;background:linear-gradient(#FFFFFF 0%,#FFFFFF 35%,#EFEFEF 65%,#DCDCDC 100%);box-shadow:1px 2px 2px rgba(0,0,0,0.25);"></div><div style="position:absolute;left:1214px;top:347px;width:157px;height:20px;overflow:hidden;"><div style="position:absolute;top:0.81px;height:10.5px;line-height:10.5px;font-size:10.5px;white-space:pre;color:#000;font-weight:bold;letter-spacing:0.15px;left:4.5px;">Leave / Absence - Internal  Pr</div></div><div style="position:absolute;top:363.84px;height:12px;line-height:12px;font-size:12px;white-space:pre;color:#000;left:1345.5px;width:20px;text-align:right;">h</div><div style="position:absolute;top:365.11px;height:10.5px;line-height:10.5px;font-size:10.5px;white-space:pre;color:#000;font-weight:bold;letter-spacing:0.6px;left:1296.5px;width:60px;text-align:right;">7.5</div><div style="position:absolute;left:792px;top:490px;width:268px;height:218px;border:1px solid #A4A4A4;background:#fff;"></div><div style="position:absolute;top:495.69px;height:11px;line-height:11px;font-size:11px;white-space:pre;color:#000;left:811.4px;">New timesheet</div><div style="position:absolute;top:512.69px;height:11px;line-height:11px;font-size:11px;white-space:pre;color:#000;left:811.4px;">Edit the selected timesheet</div><div style="position:absolute;top:529.69px;height:11px;line-height:11px;font-size:11px;white-space:pre;color:#000;left:811.4px;">Delete the selected timesheet</div><div style="position:absolute;left:795px;top:547px;width:264px;height:1px;background:#A8A8A8;"></div><div style="position:absolute;top:555.69px;height:11px;line-height:11px;font-size:11px;white-space:pre;color:#000;left:811.4px;">Approve the selected timesheet</div><div style="position:absolute;top:572.69px;height:11px;line-height:11px;font-size:11px;white-space:pre;color:#000;left:811.4px;">Approve the timesheets of Thursday, June 30</div><div style="position:absolute;top:589.69px;height:11px;line-height:11px;font-size:11px;white-space:pre;color:#000;left:811.4px;">Approve the timesheets of the current week</div><div style="position:absolute;top:606.69px;height:11px;line-height:11px;font-size:11px;white-space:pre;color:#000;left:811.4px;">Unapprove</div><svg style="position:absolute;left:1049px;top:608px" width="5" height="8" viewBox="0 0 5 8"><path d="M0 0L4 4L0 8Z" fill="#000"/></svg><div style="position:absolute;left:795px;top:624px;width:264px;height:1px;background:#A8A8A8;"></div><div style="position:absolute;top:632.69px;height:11px;line-height:11px;font-size:11px;white-space:pre;color:#000;left:811.4px;">Copy the selected timesheet on</div><svg style="position:absolute;left:1049px;top:634px" width="5" height="8" viewBox="0 0 5 8"><path d="M0 0L4 4L0 8Z" fill="#000"/></svg><div style="position:absolute;top:649.69px;height:11px;line-height:11px;font-size:11px;white-space:pre;color:#000;left:811.4px;">Copy the timesheets from the selected date on</div><svg style="position:absolute;left:1049px;top:651px" width="5" height="8" viewBox="0 0 5 8"><path d="M0 0L4 4L0 8Z" fill="#000"/></svg><div style="position:absolute;top:666.69px;height:11px;line-height:11px;font-size:11px;white-space:pre;color:#000;left:811.4px;">Copy the current week on</div><svg style="position:absolute;left:1049px;top:668px" width="5" height="8" viewBox="0 0 5 8"><path d="M0 0L4 4L0 8Z" fill="#000"/></svg><div style="position:absolute;left:795px;top:684px;width:264px;height:1px;background:#A8A8A8;"></div><div style="position:absolute;left:795px;top:690px;width:263px;height:17px;background:#316AC5;"></div><div style="position:absolute;top:692.69px;height:11px;line-height:11px;font-size:11px;white-space:pre;color:#fff;left:811.4px;">Print</div><svg style="position:absolute;left:1049px;top:694px" width="5" height="8" viewBox="0 0 5 8"><path d="M0 0L4 4L0 8Z" fill="#fff"/></svg><div style="position:absolute;left:1056px;top:687px;width:168px;height:55px;border:1px solid #A4A4A4;background:#fff;"></div><div style="position:absolute;left:1059px;top:707px;width:164px;height:17px;background:#316AC5;"></div><div style="position:absolute;top:692.69px;height:11px;line-height:11px;font-size:11px;white-space:pre;color:#000;left:1075.4px;">1. Daily timesheets</div><div style="position:absolute;top:709.69px;height:11px;line-height:11px;font-size:11px;white-space:pre;color:#fff;left:1075.4px;">2. Weekly timesheets</div><div style="position:absolute;top:726.69px;height:11px;line-height:11px;font-size:11px;white-space:pre;color:#000;left:1075.4px;">3. Reimbursable expenses</div><svg style="position:absolute;left:1212px;top:716px" width="14" height="22" viewBox="0 0 14 22">
<path d="M0.5 0.5 L0.5 16.5 L4.5 12.5 L7.5 19.5 L10 18.5 L7 11.5 L12 11.5 Z" fill="#fff" stroke="#000" stroke-width="1"/>
</svg></body></html>
